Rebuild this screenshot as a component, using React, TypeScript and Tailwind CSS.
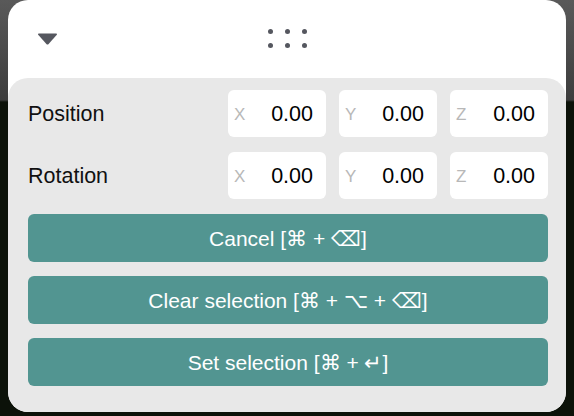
import React from "react";

const font = { fontFamily: '"Liberation Sans", Arial, sans-serif' };

function AxisInput({ axis, value }: { axis: string; value: string }) {
  return (
    <div className="flex h-[47px] w-[98px] items-center justify-between rounded-[6px] bg-white pl-[6px] pr-[13px] pt-[2px]">
      <span className="text-[17px] text-[#b8b8b8]">{axis}</span>
      <span className="text-[21.5px] text-black">{value}</span>
    </div>
  );
}

function VectorRow({ label }: { label: string }) {
  return (
    <div className="flex items-center">
      <span className="flex-1 pt-[2px] text-[21.5px] text-[#111]">{label}</span>
      <div className="flex gap-[13px]">
        <AxisInput axis="X" value="0.00" />
        <AxisInput axis="Y" value="0.00" />
        <AxisInput axis="Z" value="0.00" />
      </div>
    </div>
  );
}

function ActionButton({ children }: { children: React.ReactNode }) {
  return (
    <button className="flex h-[48px] w-full items-center justify-center rounded-[6px] bg-[#529591] pt-[1px] text-[21px] text-white">
      {children}
    </button>
  );
}

export default function App() {
  return (
    <div
      className="flex h-[416px] w-[574px] bg-[linear-gradient(to_bottom,#595959_0px,#3d3d3d_100px,#0c1209_102px,#0c1209_100%)] px-[8px] pb-[4px]"
      style={font}
    >
      <div className="flex w-full flex-col overflow-hidden rounded-[20px] bg-white">
        {/* Header */}
        <div className="relative flex h-[78px] items-center justify-center">
          <svg
            className="absolute left-[29px] top-[33px]"
            width="21"
            height="12"
            viewBox="0 0 21 12"
          >
            <path
              d="M2 0.5 H19 Q20.8 0.5 19.6 1.9 L11.6 11 Q10.5 12.1 9.4 11 L1.4 1.9 Q0.2 0.5 2 0.5 Z"
              fill="#55575f"
            />
          </svg>
          <div className="mt-[-1px] grid grid-cols-3 gap-x-[12px] gap-y-[9px]">
            {Array.from({ length: 6 }).map((_, i) => (
              <span key={i} className="h-[5px] w-[5px] rounded-full bg-[#55575f]" />
            ))}
          </div>
        </div>

        {/* Body */}
        <div className="flex flex-1 flex-col gap-[15px] rounded-[20px] bg-[#e8e8e8] pb-[26px] pl-[20px] pr-[18px] pt-[12px]">
          <VectorRow label="Position" />
          <VectorRow label="Rotation" />
          <div className="flex flex-col gap-[14px]">
            <ActionButton>Cancel [⌘ + ⌫]</ActionButton>
            <ActionButton>Clear selection [⌘ + ⌥ + ⌫]</ActionButton>
            <ActionButton>Set selection [⌘ + ↵]</ActionButton>
          </div>
        </div>
      </div>
    </div>
  );
}
